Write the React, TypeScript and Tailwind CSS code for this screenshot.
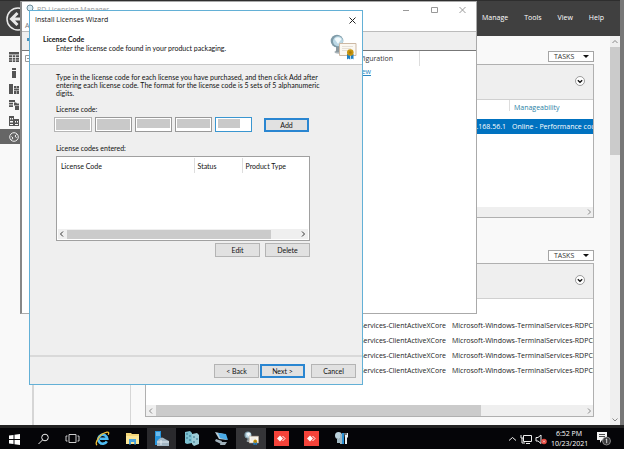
import type { ReactNode } from "react"

const menus = ["Manage", "Tools", "View", "Help"]

const services = [1, 2, 3, 4]

const codeBoxes = [
  { id: 1, box: "w-[38px] border border-[#b5b5b5]", fill: "w-full h-[11px]" },
  { id: 2, box: "w-[37px] border border-[#999]", fill: "w-full h-[11px]" },
  { id: 3, box: "w-[37px] border border-[#999]", fill: "w-full h-[9px]" },
  { id: 4, box: "w-[37px] border border-[#999]", fill: "w-full h-[9px]" },
  { id: 5, box: "w-[37px] border border-[#3a96d0]", fill: "ml-px w-[22px] h-[9px]" },
]

const sideIcons = [
  <path key="dash" d="M0 0h10v2.500H0zM0 3.300h3v2H0zM3.700 3.300h2.600v2H3.700zM7 3.300h3v2H7zM0 6h3v1.700H0zM3.700 6h2.600v1.700H3.700zM7 6h3v1.700H7zM0 8.300h3V10H0zM3.700 8.300h2.600V10H3.700zM7 8.300h3V10H7z" />,
  <path key="local" d="M3 0h4v2H3zM3 3h4v7H3z" />,
  <path key="all" d="M0 0h4v10H0zM5 2h2v2H5zM7.500 2H10v2H7.500zM5 4.500h5v2H5zM5 7h2v3H5zM7.500 7H10v3H7.500z" />,
  <path key="files" d="M0 0h6v2H0zM0 2.700h4v1.800H0zM0 5.200h4V7H0zM5 2.500h2l1 1h2v2H5zM6 6h4v4H6z" />,
  <path key="rds" fillRule="evenodd" d="M0 0h5v3h5v7H0zM1 2v1.500h1.200V2zM3 2v1.500h1V2zM1 5v1.500h3V5zM1 8v1h3V8zM6 5v1.500h1V5zM8 5v1.500h1V5zM6 8v1h3V8z" />,
]

function TasksButton() {
  return (
    <button className="flex h-[11px] w-[46px] items-center justify-between border border-[#a5a5a5] bg-white pl-[5px] pr-1 text-[7px] leading-[9px] text-[#333]">
      TASKS
      <svg className="h-[3px] w-[6px]" viewBox="0 0 6 3">
        <path d="M0 0h6L3 3z" fill="#111" />
      </svg>
    </button>
  )
}

function Chevron({ dir, className }: { dir: "left" | "right" | "up" | "down"; className: string }) {
  const paths = {
    left: "M5 1.500 2.500 4 5 6.500",
    right: "M3 1.500 5.500 4 3 6.500",
    up: "M1.500 5.500 4 3l2.500 2.500",
    down: "M1.500 2.500 4 5l2.500-2.500",
  }
  return (
    <svg className={className} viewBox="0 0 8 8" fill="none" stroke="currentColor">
      <path d={paths[dir]} />
    </svg>
  )
}

function PanelHeader() {
  return (
    <div className="flex h-[35px] shrink-0 justify-end border-b border-[#d0d0d0] bg-[#efefef] pr-2 pt-[11px]">
      <button aria-label="Collapse" className="h-[10px] w-[10px]">
        <svg viewBox="0 0 10 10" fill="none">
          <circle cx="5" cy="5" r="4.500" fill="#fff" stroke="#777" strokeWidth=".7" />
          <path d="M2.800 4.200 5 6.300l2.200-2.100" stroke="#111" strokeWidth="1.300" />
        </svg>
      </button>
    </div>
  )
}

function WizardButton({ children, primary }: { children: ReactNode; primary?: boolean }) {
  return (
    <button
      className={
        primary
          ? "h-[14px] w-[45px] border-2 border-[#2a86d1] bg-[#e1e1e1] text-center leading-[10px]"
          : "h-[14px] w-[45px] border border-[#b4b4b4] bg-[#e1e1e1] text-center leading-[12px]"
      }
    >
      {children}
    </button>
  )
}

function LicenseIcon({ className }: { className: string }) {
  return (
    <svg className={className} viewBox="0 0 27 27">
      <ellipse cx="9" cy="18" rx="4.500" ry="1.700" fill="#a9b3b8" />
      <path d="M6 11h3.500v7H6z" fill="#8b999f" />
      <circle cx="7" cy="7" r="6.300" fill="#7f9ba8" />
      <circle cx="8" cy="7.200" r="5" fill="#bcd8e5" />
      <path d="M4.500 5q3.500-3.500 7 0l-3.500 5z" fill="#f2fafc" />
      <path d="M9.500 9.500h16.500v12H9.500z" fill="#fbf8f2" stroke="#cdb9a5" />
      <path d="M12 12.500h11M12 14.500h9M12 16.500h5" stroke="#ddd5cc" strokeWidth=".7" />
      <path d="M17 20h3v5.500l-1.500-1-1.500 1zM20.700 20h2.800v5.500l-1.400-1-1.400 1z" fill="#1e7fc4" />
      <circle cx="20.300" cy="18.500" r="3.300" fill="#c6940e" />
      <circle cx="20.300" cy="18.500" r="1.300" fill="#a87a08" />
    </svg>
  )
}

function ServerManager() {
  return (
    <main className="flex min-h-0 flex-1 border-r-4 border-[#777]">
      <div className="flex min-w-0 flex-1 flex-col border-t border-[#2e2e2e]">
        <header className="flex h-[35px] shrink-0 items-center justify-between bg-[#404040] pl-[6px] pr-4 text-white">
          <button aria-label="Back" className="h-6 w-6">
            <svg viewBox="0 0 24 24" fill="none" stroke="#e8e8e8">
              <circle cx="12" cy="12" r="11" strokeWidth="1.500" />
              <path d="M20 12H6M11.500 6l-6 6 6 6" strokeWidth="3" />
            </svg>
          </button>
          <nav className="flex gap-4 text-[7px] font-medium">
            {menus.map((m) => (
              <button key={m}>{m}</button>
            ))}
          </nav>
        </header>
        <div className="flex min-h-0 flex-1 bg-[#f9f9f9]">
          <nav className="flex w-[34px] shrink-0 flex-col border-r-2 border-[#d6d6d6] pt-[13px]">
            {sideIcons.map((icon) => (
              <button key={icon.key} aria-label={String(icon.key)} className="flex h-4 w-5 items-center pl-[9px]">
                <svg className="h-[10px] w-[10px]" viewBox="0 0 10 10" fill="#555">
                  {icon}
                </svg>
              </button>
            ))}
            <button aria-label="Remote Desktop Services" className="flex h-[15px] w-5 items-center bg-[#666] pl-[9px]">
              <svg className="h-[10px] w-[10px]" viewBox="0 0 10 10" fill="none" stroke="#eee">
                <circle cx="5" cy="5" r="4.300" />
                <path d="M2.500 4.500 4 6 2.800 7.500M7.500 2.500 6 4l1.500 1.800" />
              </svg>
            </button>
          </nav>
          <div className="w-[97px] shrink-0 border-r border-[#d6d6d6]"></div>
          <div className="flex min-w-0 flex-1 flex-col pl-[14px] pr-4 pt-[15px] text-[7px]">
            <div className="mb-[2px] flex justify-end">
              <TasksButton />
            </div>
            <section className="flex h-[154px] shrink-0 flex-col border border-[#b0b0b0] bg-white">
              <PanelHeader />
              <div className="flex h-[19px] shrink-0 justify-end">
                <div className="h-[11px] w-[84px] border-l border-[#ddd] pl-1 pt-[2px] leading-[11px] text-[#2a7fa5]">Manageability</div>
              </div>
              <div className="flex h-[15px] shrink-0 justify-end overflow-hidden bg-[#0072c0] leading-[15px] whitespace-nowrap text-white">
                <span>192.168.56.1</span>
                <span className="ml-[6px] w-[81px] shrink-0 overflow-hidden">Online - Performance counters</span>
              </div>
              <div className="mt-auto flex h-[10px] items-center justify-end bg-[#efefef] text-[#888]">
                <Chevron dir="right" className="h-2 w-2" />
              </div>
            </section>
            <div className="mb-[2px] mt-8 flex justify-end">
              <TasksButton />
            </div>
            <section className="flex h-[154px] shrink-0 flex-col border border-[#b0b0b0] bg-white">
              <PanelHeader />
              <div className="pt-[19px]">
                {services.map((s) => (
                  <div key={s} className="flex h-[15px] justify-end overflow-hidden leading-[15px] whitespace-nowrap text-[#222]">
                    <span>Microsoft-Windows-TerminalServices-ClientActiveXCore</span>
                    <span className="ml-[6px] w-[141px] shrink-0 overflow-hidden">Microsoft-Windows-TerminalServices-RDPClient</span>
                  </div>
                ))}
              </div>
              <div className="mt-auto flex h-[11px] items-center bg-[#efefef] text-[#888]">
                <Chevron dir="left" className="mx-px h-2 w-2" />
                <div className="h-full w-[325px] bg-[#cbcbcb]"></div>
                <Chevron dir="right" className="ml-auto h-2 w-2" />
              </div>
            </section>
          </div>
          <div className="flex w-[10px] shrink-0 flex-col items-center bg-[#efefef] text-[#888]">
            <Chevron dir="up" className="my-px h-[9px] w-2" />
            <div className="h-[108px] w-full bg-[#cbcbcb]"></div>
            <Chevron dir="down" className="mb-px mt-auto h-2 w-2" />
          </div>
        </div>
      </div>
    </main>
  )
}

function LicensingManager() {
  return (
    <div className="absolute left-5 top-px flex h-[313px] w-[457px] flex-col border border-l-2 border-[#aaa] border-l-[#888] bg-white text-[7px] text-[#333]">
      <div className="flex h-4 items-center pl-[3px] text-[#999]">
        <svg className="h-3 w-3" viewBox="0 0 12 12">
          <circle cx="5" cy="4" r="3" fill="#d6eaf3" stroke="#6f8c99" />
          <path d="M4 7h2v4H4z" fill="#777" />
          <path d="M7 6h4v4H7z" fill="#ddd" />
        </svg>
        <span className="flex-1">RD Licensing Manager</span>
        <svg className="mr-[10px] h-2 w-[63px]" viewBox="0 0 63 8" fill="none" stroke="#999">
          <path d="M0 4.500h6M28.500 1.500h6v5h-6zM56.500 1l6 6M62.500 1l-6 6" />
        </svg>
      </div>
      <div className="h-[13px] pl-[3px] leading-[15px] text-[#777]">Action</div>
      <div className="flex h-5 items-center border-b border-t border-b-[#777] border-t-[#bbb] bg-[#efefef] pl-[5px]">
        <svg className="h-2 w-2" viewBox="0 0 8 8">
          <path d="M0 1h6v3H0zM3 4h2v4H3z" fill="#4a90b8" />
        </svg>
      </div>
      <div className="flex h-[15px]">
        <svg className="ml-[3px] mt-1 h-[7px] w-[7px]" viewBox="0 0 7 7" fill="none" stroke="#999">
          <path d="M.5.500h6v6h-6zM2 3.500h3" />
        </svg>
        <div className="ml-auto border-r border-[#ddd] pr-[26px] text-right leading-[15px]">Configuration</div>
        <div className="w-14"></div>
      </div>
      <div className="pr-[105px] text-right leading-[12px]">
        <a href="#review" className="text-[#2a86c0] underline">Review</a>
      </div>
    </div>
  )
}

function LicenseWizard() {
  return (
    <div className="absolute left-[29px] top-[10px] flex h-[375px] w-[334px] flex-col border border-[#63b0d6] bg-[#efefef] font-['Lato','Liberation_Sans',sans-serif] text-[7px] leading-[8px] text-[#111]">
      <div className="flex h-[18px] shrink-0 items-center justify-between bg-white pl-[5px] pr-[6px] font-['Open_Sans',sans-serif]">
        <h1>Install Licenses Wizard</h1>
        <button aria-label="Close">
          <svg className="h-[7px] w-[7px]" viewBox="0 0 7 7" stroke="#222">
            <path d="M.5.500l6 6M6.500.500l-6 6" />
          </svg>
        </button>
      </div>
      <div className="flex h-9 shrink-0 justify-between border-b border-[#c8c8c8] bg-white pl-[13px] pr-[5px]">
        <div className="pt-[6px]">
          <h2 className="font-bold">License Code</h2>
          <p className="pl-[13px] pt-px">Enter the license code found in your product packaging.</p>
        </div>
        <LicenseIcon className="mt-[5px] h-[27px] w-[27px]" />
      </div>
      <div className="flex-1 pl-[26px] pt-2">
        <p className="w-[256px] whitespace-nowrap">
          Type in the license code for each license you have purchased, and then click Add after
          <br />
          entering each license code. The format for the license code is 5 sets of 5 alphanumeric
          <br />
          digits.
        </p>
        <label htmlFor="code-1" className="mt-2 block">License code:</label>
        <div className="-ml-[2px] mt-1 flex items-center">
          <div className="flex w-[210px] gap-[3px]">
            {codeBoxes.map((c) => (
              <span key={c.id} className={`block h-[15px] bg-white p-px ${c.box}`}>
                <input id={`code-${c.id}`} aria-label={`License code part ${c.id}`} className={`block bg-[#c9c9c9] ${c.fill}`} />
              </span>
            ))}
          </div>
          <WizardButton primary>Add</WizardButton>
        </div>
        <p className="mt-3">License codes entered:</p>
        <div className="mt-1 flex h-[85px] w-[254px] flex-col border border-[#a0a0a0] bg-white p-px">
          <table className="w-full text-left">
            <thead>
              <tr className="h-[15px]">
                <th className="w-[136px] border-r border-[#ddd] pl-[3px] font-normal">License Code</th>
                <th className="w-12 border-r border-[#ddd] pl-[3px] font-normal">Status</th>
                <th className="pl-[3px] font-normal">Product Type</th>
              </tr>
            </thead>
          </table>
          <div className="mt-auto flex h-[10px] items-center bg-[#efefef] text-[#333]">
            <Chevron dir="left" className="h-2 w-2" />
            <div className="ml-px h-[9px] w-[204px] bg-[#cbcbcb]"></div>
            <Chevron dir="right" className="ml-auto mr-px h-2 w-2" />
          </div>
        </div>
        <div className="mt-[2px] flex w-[254px] justify-end gap-[5px]">
          <WizardButton>Edit</WizardButton>
          <WizardButton>Delete</WizardButton>
        </div>
      </div>
      <div className="flex h-[29px] shrink-0 justify-end border-t-2 border-[#d9d9d9] pr-[6px] pt-[7px]">
        <div className="mr-[6px] flex gap-px">
          <WizardButton>&lt; Back</WizardButton>
          <WizardButton primary>Next &gt;</WizardButton>
        </div>
        <WizardButton>Cancel</WizardButton>
      </div>
    </div>
  )
}

function AnyDeskIcon() {
  return (
    <svg className="h-[15px] w-[15px]" viewBox="0 0 15 15">
      <path d="M0 0h15v15H0z" fill="#f4433a" />
      <path d="M6 4.500 9 7.500l-3 3-3-3z" fill="#fff" />
      <path d="m8.500 5 2.500 2.500L8.500 10" fill="none" stroke="#fff" />
    </svg>
  )
}

const taskItems = [
  {
    name: "Start",
    cell: "w-7",
    icon: <path d="M2 4.500 6.500 4v4H2zM7.500 3.800 13 3v5H7.500zM2 9h4.500v4L2 12.400zM7.500 9H13v5l-5.500-.8z" fill="#fff" />,
  },
  {
    name: "Search",
    cell: "w-[30px]",
    icon: (
      <g fill="none" stroke="#eee">
        <circle cx="9" cy="6.500" r="3.300" />
        <path d="m6.500 9-4 4" />
      </g>
    ),
  },
  {
    name: "Task View",
    cell: "w-[29px]",
    icon: <path d="M4 3.500h7v8H4zM2.500 5H1v5h1.500M12.500 5H14v5h-1.500" fill="none" stroke="#ccc" />,
  },
  {
    name: "Internet Explorer",
    cell: "w-[31px]",
    icon: (
      <g fill="none">
        <path d="M11.800 10.300A4.500 4.500 0 1 1 12.300 7.800H5" stroke="#4fbcf2" strokeWidth="2.600" />
        <path d="M2 14.300C-.5 12 4 3 12 1.200c2-.2 2 1 1.200 2.500" stroke="#f1bd32" strokeWidth="1.300" />
      </g>
    ),
  },
  {
    name: "File Explorer",
    cell: "w-[29px]",
    icon: (
      <g>
        <path d="M1 2h5l1 1h7v10H1z" fill="#f3d578" />
        <path d="M1 5h13v8H1z" fill="#fbe798" />
        <path d="M4 8h7v5.500H9.200V11H6v2.500H4z" fill="#4aa3dd" />
      </g>
    ),
  },
  {
    name: "Server Manager",
    cell: "w-[29px] bg-[#2a2a2d]",
    icon: (
      <g>
        <path d="M1 0h6v14H1z" fill="#2595dd" />
        <path d="M2 2h4M2 4h4" stroke="#b9e0f7" />
        <path d="M5 8q3-3 6 0l4 2v5H3v-5z" fill="#a3b7c4" />
        <path d="M3 11h12M7 9v5" stroke="#e2ebf0" />
      </g>
    ),
  },
  {
    name: "Servers",
    cell: "w-[31px]",
    icon: (
      <g>
        <path d="m1 1 5-1 2 2v10l-5 1-2-1z" fill="#7cc0d0" />
        <path d="m8 3 5-1 2 2v9l-5 2-2-2z" fill="#9ccbd6" />
        <path d="M2 3h2M5 5h2M2 7h2M5 9h2M9 6h2M12 8h2M9 11h2" stroke="#34738a" />
      </g>
    ),
  },
  {
    name: "Remote Desktop",
    cell: "w-[29px]",
    icon: (
      <g>
        <path d="m1 1 9 2 3 6-8-1z" fill="#b9cdd7" />
        <path d="m4 2 8 1 2 6-8-2z" fill="#4aaae6" />
        <path d="m2 8 6 2-1 3-6-3zM7 11l6 0-2 3H6z" fill="#9fb0ba" />
      </g>
    ),
  },
]

function Taskbar() {
  return (
    <footer className="flex h-6 shrink-0 items-stretch border-t-[3px] border-[#222] bg-[#050508] text-white">
      {taskItems.map((t) => (
        <button key={t.name} aria-label={t.name} className={`flex items-center justify-center ${t.cell}`}>
          <svg className="h-[15px] w-[15px]" viewBox="0 0 15 15">{t.icon}</svg>
        </button>
      ))}
      <button aria-label="RD Licensing Manager" className="flex w-[30px] items-center justify-center bg-[#353538]">
        <LicenseIcon className="h-[15px] w-[15px]" />
      </button>
      <button aria-label="AnyDesk" className="flex w-[30px] items-center justify-center">
        <AnyDeskIcon />
      </button>
      <button aria-label="AnyDesk session" className="flex w-[30px] items-center justify-center">
        <AnyDeskIcon />
      </button>
      <button aria-label="Tools" className="flex w-[30px] items-center justify-center">
        <svg className="h-[15px] w-[15px]" viewBox="0 0 15 15">
          <circle cx="4.500" cy="4.500" r="3.500" fill="#bcd2dc" />
          <path d="M3 8h4v4H3zM6 3h4v10H6z" fill="#9fb6c1" />
          <path d="M8 2h2v11H8z" fill="#2a91d4" />
          <path d="M10.500 2h1v2h1V2h1.500v4l-1 1v6h-2V7z" fill="#e5edf0" />
        </svg>
      </button>
      <div className="ml-auto flex items-center pr-[13px]">
        <svg className="h-[14px] w-[39px]" viewBox="0 0 39 14" fill="none" stroke="#eee">
          <path d="m1 8.500 3.500-3 3.500 3" />
          <path d="M15.500 3.500h8v6h-8zM18 11.500h4M13 3v3h2M14 6v5h3" />
          <path d="M28 5.500h2l3-2.500v8.500L30 9h-2z" />
          <circle cx="36" cy="9.500" r="2.800" fill="#e5473d" stroke="none" />
          <path d="m35 8.500 2 2m0-2-2 2" strokeWidth=".7" />
        </svg>
        <div className="mx-1 w-[36px] text-center text-[7px] leading-[10px] whitespace-nowrap">
          <p>6:52 PM</p>
          <p>10/23/2021</p>
        </div>
        <button aria-label="Notifications" className="ml-[6px] h-[15px] w-[14px]">
          <svg viewBox="0 0 14 15">
            <path d="M0 1h10v8H5l-2 3V9H0z" fill="#f4f4f4" />
            <path d="M2 3.500h6M2 5.500h6" stroke="#222" strokeWidth=".8" />
            <circle cx="9.500" cy="10" r="4" fill="#3a3a3c" stroke="#aaa" strokeWidth=".7" />
            <path d="M8.700 8.500 9.700 8v4.200" stroke="#fff" strokeWidth=".8" fill="none" />
          </svg>
        </button>
      </div>
    </footer>
  )
}

export default function App() {
  return (
    <div className="relative flex h-screen flex-col overflow-hidden bg-[#f9f9f9] font-['Open_Sans',sans-serif]">
      <ServerManager />
      <LicensingManager />
      <LicenseWizard />
      <Taskbar />
    </div>
  )
}
